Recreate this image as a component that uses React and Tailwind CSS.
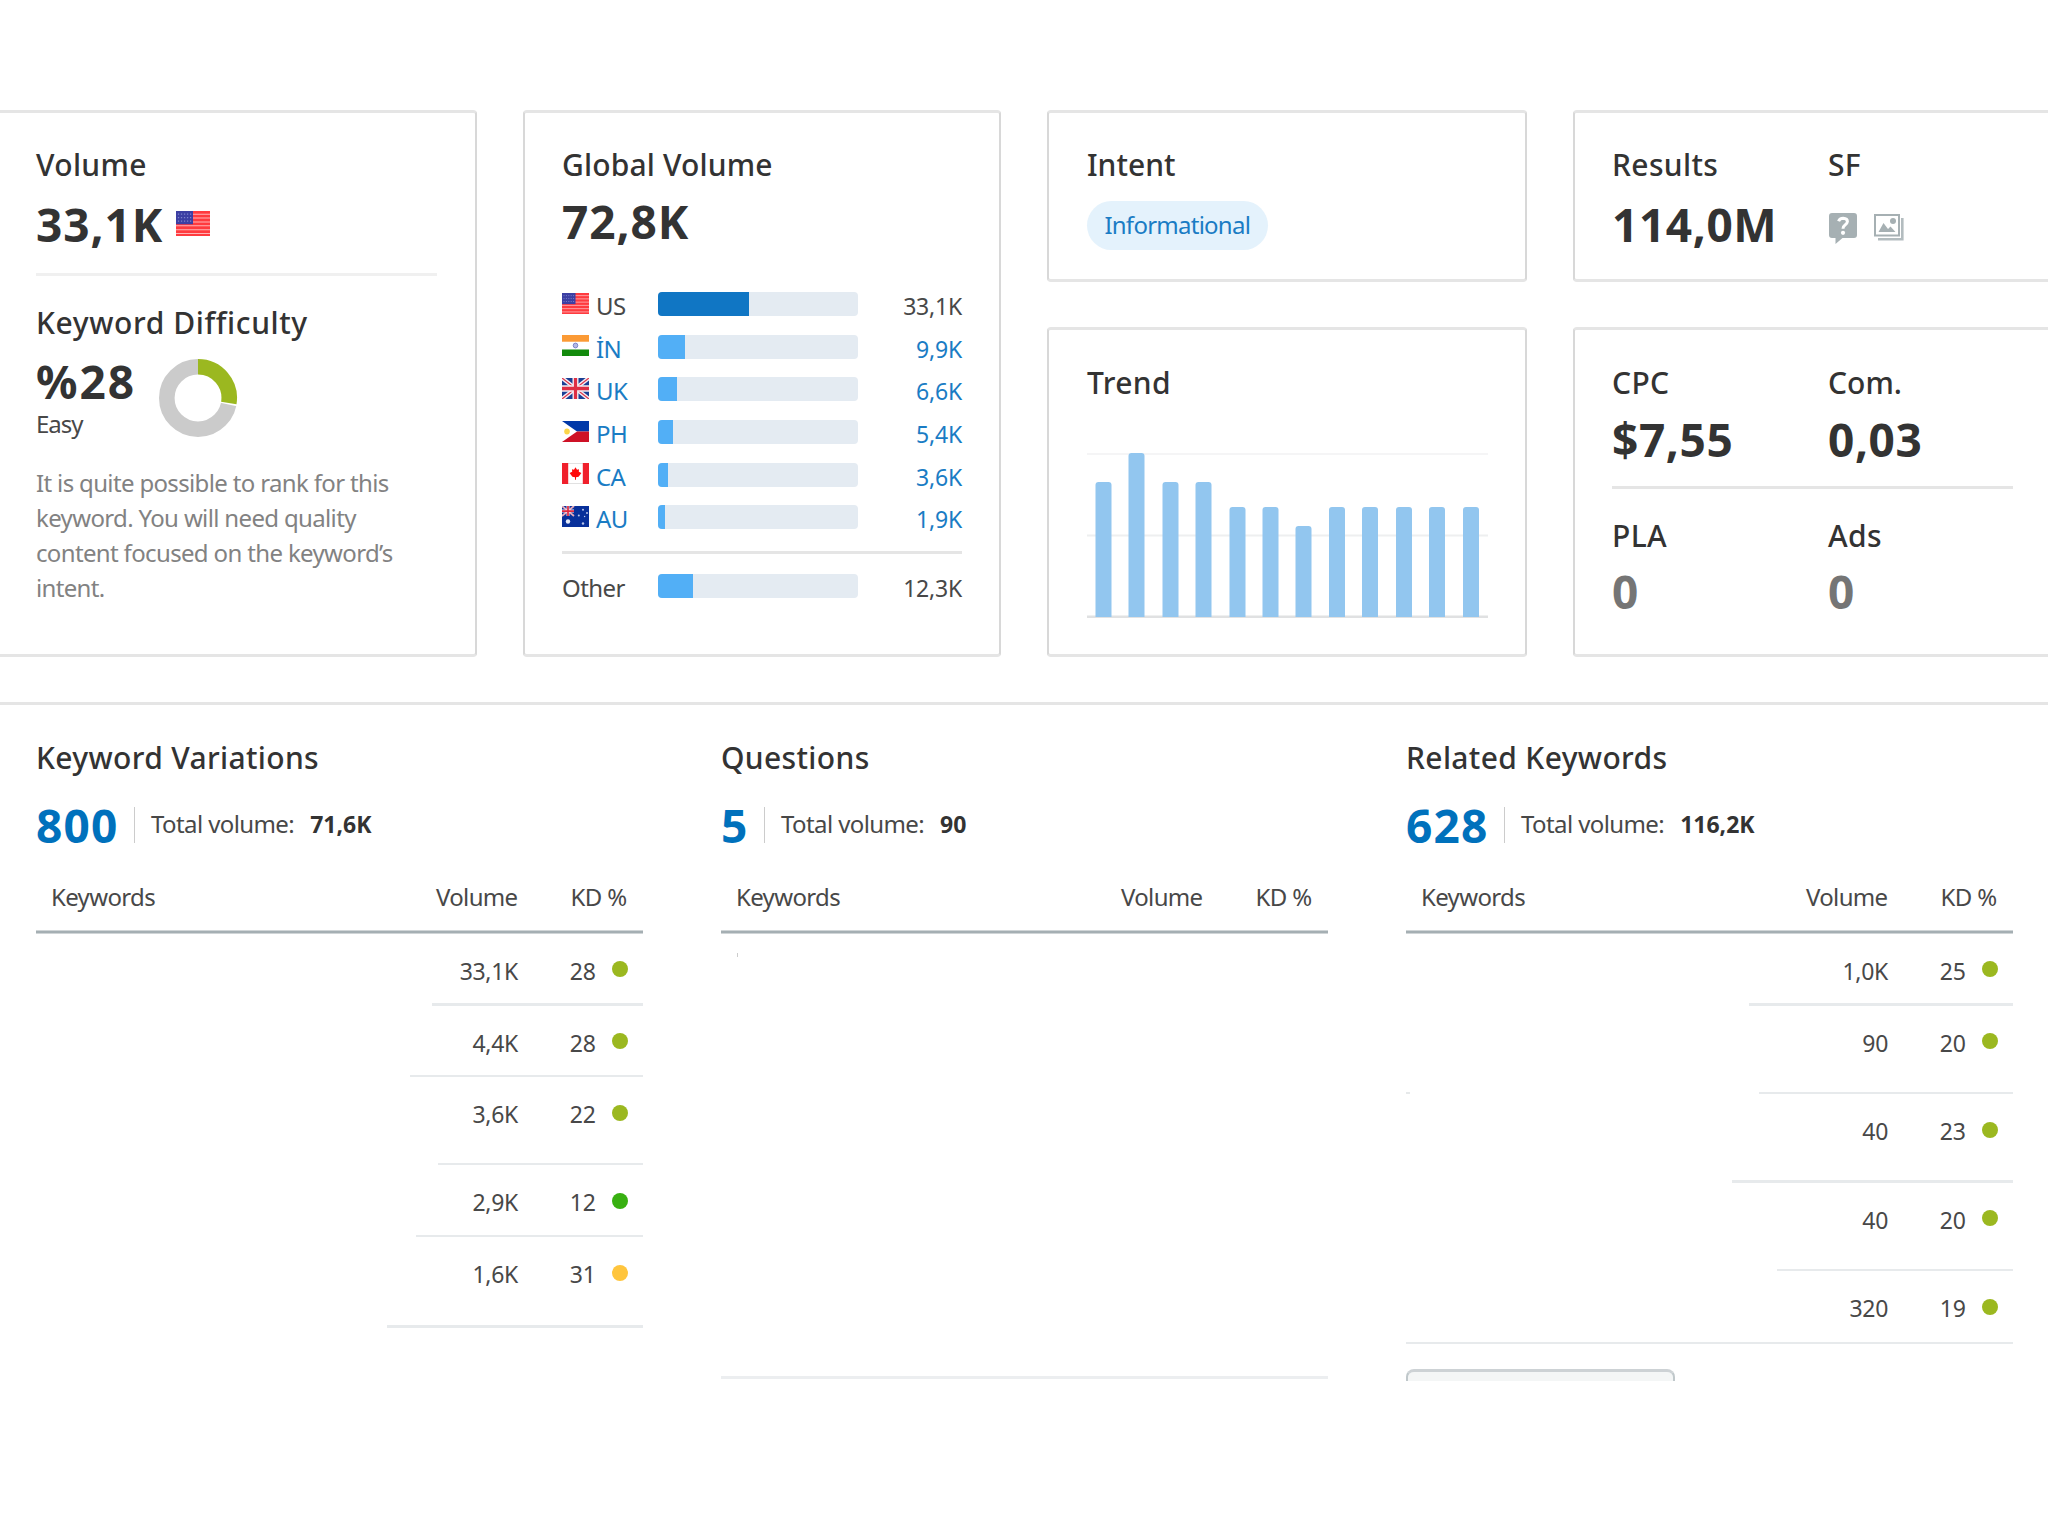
import React from 'react'

const countries = [
  { code: 'US', value: '33,1K', width: 91, current: true },
  { code: 'İN', value: '9,9K', width: 27 },
  { code: 'UK', value: '6,6K', width: 19 },
  { code: 'PH', value: '5,4K', width: 14.5 },
  { code: 'CA', value: '3,6K', width: 10 },
  { code: 'AU', value: '1,9K', width: 7 },
]

// x offset and height of every month in the trend chart
const trend = [
  [8.5, 135], [41.5, 164], [75.5, 135], [108.5, 135], [142.5, 110], [175.5, 110],
  [208.5, 91], [242, 110], [275, 110], [309, 110], [342, 110], [376, 110],
]

const variations = [
  { volume: '33,1K', kd: 28, dot: 'bg-[#9bb820]', row: 'h-[72px]', line: 'w-[211px]' },
  { volume: '4,4K', kd: 28, dot: 'bg-[#9bb820]', row: 'h-[71.5px]', line: 'w-[233px]' },
  { volume: '3,6K', kd: 22, dot: 'bg-[#9bb820]', row: 'h-[88px]', line: 'w-[205px]' },
  { volume: '2,9K', kd: 12, dot: 'bg-[#38b011]', row: 'h-[72px]', line: 'w-[227px]' },
  { volume: '1,6K', kd: 31, dot: 'bg-[#ffc53d]', row: 'h-[90.5px]', line: 'w-[256px]' },
]

const related = [
  { volume: '1,0K', kd: 25, dot: 'bg-[#9bb820]', row: 'h-[72px]', line: 'w-[264px]' },
  { volume: '90', kd: 20, dot: 'bg-[#9bb820]', row: 'h-[88.5px]', line: 'w-[254px]', stub: true },
  { volume: '40', kd: 23, dot: 'bg-[#9bb820]', row: 'h-[88.5px]', line: 'w-[281px]' },
  { volume: '40', kd: 20, dot: 'bg-[#9bb820]', row: 'h-[88.5px]', line: 'w-[236px]' },
  { volume: '320', kd: 19, dot: 'bg-[#9bb820]', row: 'h-[73px]', line: 'w-full' },
]

function UnionJack() {
  return (
    <>
      <rect width="27" height="20" fill="#1b3f94" />
      <path d="M0 0L27 20M27 0L0 20" stroke="#f3eef4" strokeWidth="4" />
      <path d="M0 0L27 20M27 0L0 20" stroke="#e0364a" strokeWidth="1.2" />
      <path d="M13.5 0V20M0 10H27" stroke="#f3eef4" strokeWidth="6" />
      <path d="M13.5 0V20M0 10H27" stroke="#dd2f45" strokeWidth="3.2" />
    </>
  )
}

function Flag({ code, className }) {
  return (
    <svg viewBox="0 0 27 20" preserveAspectRatio="none" className={className}>
      {code === 'US' && (
        <>
          <rect width="27" height="20" fill="#ff3b3f" />
          <path d="M0 2.5H27M0 5.6H27M0 8.7H27M0 11.8H27M0 14.9H27M0 18H27" stroke="#ffb3b5" strokeWidth="0.8" />
          <rect width="13.5" height="10.6" fill="#3c3fa3" />
          <path d="M1.5 2.5H12.5M1.5 5.3H12.5M1.5 8.1H12.5" stroke="#7d83cc" strokeWidth="0.9" strokeDasharray="1 1.4" />
        </>
      )}
      {code === 'İN' && (
        <>
          <rect width="27" height="20" fill="#fff" />
          <rect width="27" height="6.4" fill="#fb9a35" />
          <rect y="13.8" width="27" height="6.2" fill="#128a0c" />
          <circle cx="13.5" cy="10" r="2.3" fill="#b4b9e3" stroke="#6a72c2" strokeWidth="0.8" />
        </>
      )}
      {code === 'UK' && <UnionJack />}
      {code === 'PH' && (
        <>
          <rect width="27" height="10" fill="#0038a8" />
          <rect y="10" width="27" height="10" fill="#ce1126" />
          <path d="M0 0L15 10L0 20Z" fill="#fff" />
          <circle cx="5" cy="10" r="2.8" fill="#fcd64a" />
        </>
      )}
      {code === 'CA' && (
        <>
          <rect width="27" height="20" fill="#fff" />
          <path d="M0 0.3H27M0 19.7H27" stroke="#ccc" strokeWidth="0.7" />
          <rect width="6.2" height="20" fill="#f0202c" />
          <rect x="20.8" width="6.2" height="20" fill="#f0202c" />
          <path d="M13.5 4L15 6.4L17 6L16.8 8.4L19.4 9.6L16.6 13L14 13.6V16H13V13.6L10.4 13L7.6 9.6L10.2 8.4L10 6L12 6.4Z" fill="#ff0a0a" />
        </>
      )}
      {code === 'AU' && (
        <>
          <rect width="27" height="20" fill="#08309a" />
          <path d="M0 0L12 9.5M12 0L0 9.5" stroke="#e6a9b8" strokeWidth="1.8" />
          <path d="M6 0V9.5M0 4.8H12" stroke="#f3dfe6" strokeWidth="3" />
          <path d="M6 0V9.5M0 4.8H12" stroke="#e02840" strokeWidth="1.7" />
          <circle cx="6" cy="14.8" r="2.2" fill="#e6ecfa" />
          <g fill="#b9c6ea">
            <circle cx="21" cy="3.6" r="1" />
            <circle cx="16.8" cy="9" r="1" />
            <circle cx="25" cy="6.6" r="1" />
            <circle cx="21" cy="16.6" r="1.2" />
            <circle cx="22.6" cy="10" r="0.7" />
          </g>
        </>
      )}
    </svg>
  )
}

function Title({ children, spacing = 'tracking-[0.35px]' }) {
  return <h3 className={`text-[30px] leading-9 font-medium text-[#333] ${spacing}`}>{children}</h3>
}

function Big({ children, color = 'text-[#333]', spacing = 'tracking-[0.6px]' }) {
  return <div className={`text-[46px] leading-[48px] font-bold ${spacing} ${color}`}>{children}</div>
}

function Donut() {
  return (
    <svg viewBox="0 0 80 80" className="size-20">
      <circle cx="40" cy="40" r="31.2" fill="none" stroke="#cbcbcb" strokeWidth="15.6" />
      <path d="M40 40V0H80V48.5Z" fill="#fff" />
      <path d="M40 8.8A31.2 31.2 0 0 1 70.8 45" fill="none" stroke="#9bb820" strokeWidth="15.6" />
    </svg>
  )
}

function VolumeBar({ width, current }) {
  return (
    <div className="h-6 w-[200px] overflow-hidden rounded bg-[#e4ebf2]">
      <div className={`h-full ${current ? 'bg-[#1076c4]' : 'bg-[#52aff6]'}`} style={{ width }} />
    </div>
  )
}

function TrendChart() {
  return (
    <svg viewBox="0 0 401 168" className="mt-[48.5px] h-[168px] w-[401px]">
      <path d="M0 4H401" stroke="#f5f5f6" strokeWidth="2" />
      <path d="M0 85.5H401" stroke="#eeeff0" strokeWidth="2" />
      <path d="M0 167H401" stroke="#e0e1e2" strokeWidth="3" />
      {trend.map(([x, h]) => (
        <path key={x} d={`M${x} 167V${170 - h}q0 -3 3 -3h10q3 0 3 3V167Z`} fill="#92c6ef" />
      ))}
    </svg>
  )
}

function QuestionIcon() {
  return (
    <svg viewBox="0 0 28 31" className="h-[31px] w-7">
      <path d="M3 0H25Q28 0 28 3V22Q28 25 25 25H13.5L6.5 31V25H3Q0 25 0 22V3Q0 0 3 0Z" fill="#a6b0b3" />
      <path d="M9.6 8.2Q10.6 5.2 14.2 5.2Q18.4 5.4 18.4 8.6Q18.2 10.6 15.8 12.2Q14 13.4 14 15.8" fill="none" stroke="#fff" strokeWidth="3" />
      <circle cx="14" cy="19.8" r="2.1" fill="#fff" />
    </svg>
  )
}

function ImagesIcon() {
  return (
    <svg viewBox="0 0 30 27" className="mt-px h-[27px] w-[30px]">
      <rect x="1" y="1" width="24" height="20.5" fill="none" stroke="#a6b0b3" strokeWidth="2" />
      <path d="M4.5 18L9.5 9L14 15L16.5 12.5L21.5 18Z" fill="#a6b0b3" />
      <circle cx="19" cy="7" r="3" fill="#a6b0b3" />
      <path d="M28.3 4V25.2H4" fill="none" stroke="#b3bcbf" strokeWidth="2.6" />
    </svg>
  )
}

function KeywordTable({ title, count, total, rows = [], children }) {
  return (
    <div className="w-[606.5px]">
      <Title>{title}</Title>
      <div className="mt-[25px] flex h-12">
        <Big color="text-[#0071bc]" spacing="tracking-[1.2px]">{count}</Big>
        <div className="mt-[6px] mr-4 ml-[15px] h-9 w-[1.5px] bg-[#ccc]" />
        <span className="mt-[5px] text-[24px] leading-9 tracking-[-0.6px] text-[#484848]">Total volume:</span>
        <span className="mt-[5px] ml-4 text-[23px] leading-9 font-bold text-[#333]">{total}</span>
      </div>
      <div className="mt-[30px] flex h-[50.5px] pr-4 pl-[15px] text-[24px] leading-9 tracking-[-0.65px] text-[#484848]">
        <span className="flex-1">Keywords</span>
        <span className="w-[100px] text-right">Volume</span>
        <span className="w-[109px] text-right">KD %</span>
      </div>
      <div className="h-1 border-y border-[#d0d5d7] bg-[#a5afb3]" />
      {rows.map((r, i) => (
        <div key={i} className={`flex flex-col ${r.row}`}>
          <div className="flex flex-1 justify-end pt-[19px] pr-[15px] text-[23px] leading-9 tracking-[-0.3px] text-[#484848]">
            <span>{r.volume}</span>
            <span className="w-[77.5px] text-right">{r.kd}</span>
            <span className={`mt-[8.5px] ml-4 size-4 rounded-full ${r.dot}`} />
          </div>
          <div className="flex justify-between">
            <div className={r.stub ? 'h-0.5 w-1 bg-[#e6e9ea]' : ''} />
            <div className={`h-[2.5px] bg-[#e7eaec] ${r.line}`} />
          </div>
        </div>
      ))}
      {children}
    </div>
  )
}

export default function App() {
  const card = 'rounded border-x-2 border-y-3 border-x-[#d8d8d8] border-y-[#e5e5e5] bg-white'

  return (
    <div className="h-[1536px] w-[2048px] overflow-hidden bg-white pt-[110px] font-['Noto_Sans',sans-serif]">
      <div className="flex h-[547px] gap-[46px]">
        <div className="w-[477px] rounded-r border-y-3 border-r-2 border-y-[#e5e5e5] border-r-[#d8d8d8] pt-[34px] pr-[38px] pl-9">
          <Title>Volume</Title>
          <div className="mt-[17px] flex">
            <Big spacing="tracking-[0.9px]">33,1K</Big>
            <Flag code="US" className="mt-[11px] ml-[13px] h-[25px] w-[34px]" />
          </div>
          <div className="mt-[25px] h-[3px] bg-[#f0f0f0]" />
          <div className="mt-[29px]">
            <Title spacing="tracking-[0.6px]">Keyword Difficulty</Title>
          </div>
          <div className="mt-4 flex h-[85px]">
            <div className="w-[122px]">
              <Big spacing="tracking-[2px]">%28</Big>
              <div className="mt-px text-[24px] leading-[35px] tracking-[-1px] text-[#484848]">Easy</div>
            </div>
            <div className="mt-px">
              <Donut />
            </div>
          </div>
          <p className="mt-[23px] text-[24px] leading-[35px] tracking-[-0.65px] text-[#828282]">
            It is quite possible to rank for this<br />
            keyword. You will need quality<br />
            content focused on the keyword’s<br />
            intent.
          </p>
        </div>

        <div className={`w-[478px] px-[37px] pt-[34px] ${card}`}>
          <Title spacing="tracking-[0.15px]">Global Volume</Title>
          <div className="mt-3.5">
            <Big spacing="tracking-[0.9px]">72,8K</Big>
          </div>
          <div className="mt-[38px] text-[24px] leading-9 tracking-[-0.6px]">
            {countries.map((c) => (
              <div key={c.code} className={`flex h-[42.6px] items-center ${c.current ? 'text-[#484848]' : 'text-[#1a7cc4]'}`}>
                <Flag code={c.code} className="mb-0.5 h-[21px] w-[27px]" />
                <span className="mt-1 ml-[7px] w-[62px]">{c.code}</span>
                <VolumeBar width={c.width} current={c.current} />
                <span className="mt-1 flex-1 text-right text-[23px] tracking-[-0.2px]">{c.value}</span>
              </div>
            ))}
            <div className="mt-3 h-[3px] bg-[#e5e5e5]" />
            <div className="mt-[11px] flex h-[42px] items-center text-[#484848]">
              <span className="mt-1 w-24">Other</span>
              <VolumeBar width={35} />
              <span className="mt-1 flex-1 text-right text-[23px] tracking-[-0.2px]">12,3K</span>
            </div>
          </div>
        </div>

        <div className="flex w-[480px] flex-col gap-[45px]">
          <div className={`h-[172px] px-[38px] pt-[34px] ${card}`}>
            <Title spacing="tracking-normal">Intent</Title>
            <div className="mt-[18px] flex h-[49px] w-[180.5px] items-center justify-center rounded-full bg-[#e4f2fc] pb-px text-[24px] tracking-[-0.75px] text-[#1a7cc4]">
              Informational
            </div>
          </div>
          <div className={`flex-1 px-[38px] pt-[35px] ${card}`}>
            <Title>Trend</Title>
            <TrendChart />
          </div>
        </div>

        <div className="flex flex-1 flex-col gap-[45px]">
          <div className="flex h-[172px] rounded-l border-y-3 border-l-2 border-y-[#e5e5e5] border-l-[#d8d8d8] pt-[34px] pl-[37px]">
            <div className="w-[216px]">
              <Title>Results</Title>
              <div className="mt-[17px]">
                <Big>114,0M</Big>
              </div>
            </div>
            <div>
              <Title>SF</Title>
              <div className="mt-[30px] flex items-start gap-[17px] pl-px">
                <QuestionIcon />
                <ImagesIcon />
              </div>
            </div>
          </div>
          <div className="flex-1 rounded-l border-y-3 border-l-2 border-y-[#e5e5e5] border-l-[#d8d8d8] pt-[35px] pr-[35px] pl-[37px]">
            <div className="grid grid-cols-[216px_1fr] gap-y-3.5">
              <Title>CPC</Title>
              <Title spacing="tracking-normal">Com.</Title>
              <Big>$7,55</Big>
              <Big>0,03</Big>
            </div>
            <div className="mt-[23px] mb-[29px] h-[3px] bg-[#e5e5e5]" />
            <div className="grid grid-cols-[216px_1fr] gap-y-[13px]">
              <Title>PLA</Title>
              <Title>Ads</Title>
              <Big color="text-[#757575]">0</Big>
              <Big color="text-[#757575]">0</Big>
            </div>
          </div>
        </div>
      </div>

      <div className="mt-[45px] h-[3px] bg-[#e5e5e5]" />

      <div className="flex gap-[78.5px] pt-[35px] pl-9">
        <KeywordTable title="Keyword Variations" count="800" total="71,6K" rows={variations} />
        <KeywordTable title="Questions" count="5" total="90">
          <div className="mt-[19px] ml-4 h-1 w-px bg-[#ccc]" />
          <div className="mt-[419.5px] h-[2.5px] bg-[#eceef0]" />
        </KeywordTable>
        <KeywordTable title="Related Keywords" count="628" total="116,2K" rows={related}>
          <div className="mt-[25px] h-3 w-[269px] rounded-t-lg border-x-2 border-t-3 border-x-[#c0c8cb] border-t-[#cdd2d5] bg-[#f4f6f6]" />
        </KeywordTable>
      </div>
    </div>
  )
}
